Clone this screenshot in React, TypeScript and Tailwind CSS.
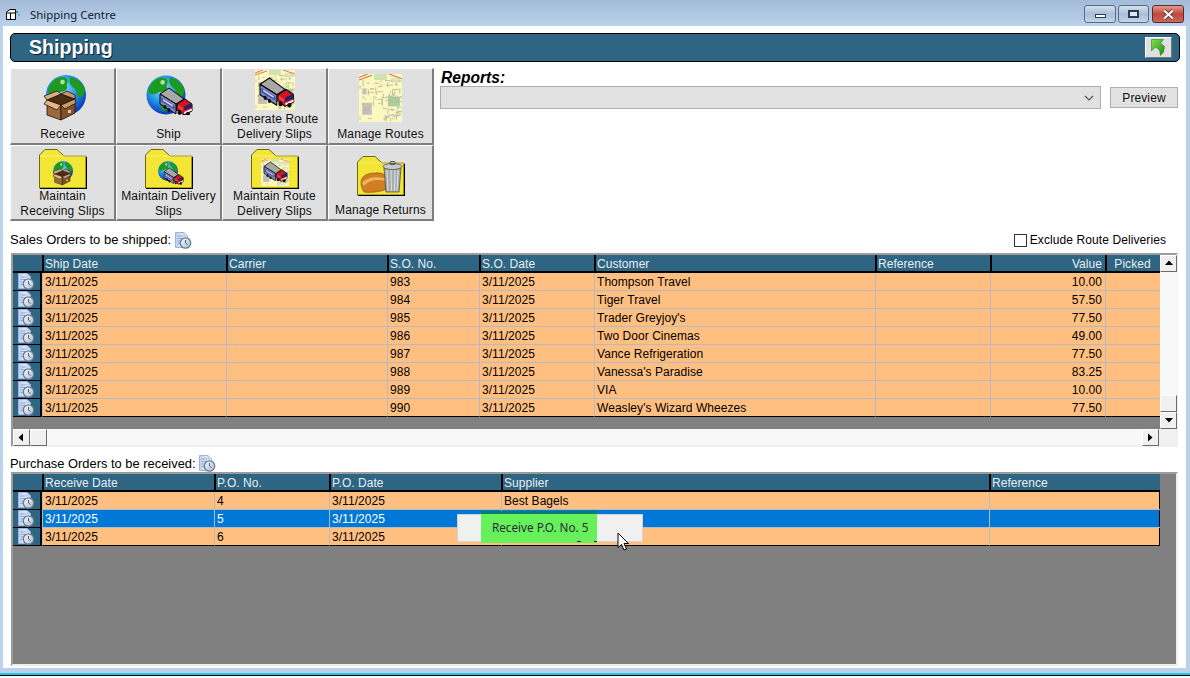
import React from "react";

const sansText = "font-['Liberation_Sans',Arial,sans-serif]";

function Globe({ x, y, r }: { x: number; y: number; r: number }) {
  const k = r / 20;
  return (
    <g transform={`translate(${x} ${y}) scale(${k})`}>
      <defs>
        <radialGradient id="globeFill" cx="0.42" cy="0.35" r="0.72">
          <stop offset="0" stopColor="#8fe0ff" />
          <stop offset="0.5" stopColor="#1e95ea" />
          <stop offset="1" stopColor="#0522a8" />
        </radialGradient>
      </defs>
      <circle cx="0" cy="0" r="20" fill="url(#globeFill)" />
      <path d="M-13 -14 C-8 -19 -1 -19 1 -16 C3 -13 0 -11 1 -8 C2 -5 -3 -3 -7 -3 C-10 -1 -15 1 -18 -3 C-18 -8 -16 -11 -13 -14Z" fill="#1f9a20" />
      <path d="M4 -18 C11 -17 17 -12 19 -5 C18 1 15 4 13 2 C10 0 11 -5 8 -7 C5 -9 2 -13 4 -18Z" fill="#1f9a20" />
      <path d="M-5 4 C-1 3 3 6 3 10 C2 14 -1 17 -3 17 C-5 14 -7 8 -5 4Z" fill="#1f9a20" />
      <path d="M-5 -15 C-2 -16 0 -14 -2 -11 C-5 -10 -7 -12 -5 -15Z" fill="#a9e09a" />
    </g>
  );
}

function Truck({ x, y, k = 1 }: { x: number; y: number; k?: number }) {
  return (
    <g transform={`translate(${x} ${y}) scale(${k})`}>
      <polygon points="0,6 9,0 24,11 16,16" fill="#a8a8a8" stroke="#000" strokeWidth="1" strokeLinejoin="round" />
      <polygon points="0,6 16,16 16,26 0,16" fill="#8087b0" stroke="#000" strokeWidth="1" strokeLinejoin="round" />
      <polygon points="1.500,9.500 14.500,17.500 14.500,21.500 1.500,13.500" fill="#3c48b4" />
      <polygon points="3,11 13,17.300 13,19 3,12.700" fill="#d9def8" />
      <polygon points="17,16 25,11 32,16 32,23 24,27 17,22" fill="#d4141f" stroke="#000" strokeWidth="1" strokeLinejoin="round" />
      <polygon points="24,18.500 32,15 32,19 24,22.500" fill="#23236b" />
      <polygon points="24,24 32,20.500 32,22.500 24,26" fill="#f3f3f3" />
      <polygon points="18,17 23,20 23,23 18,20" fill="#f04048" />
      <ellipse cx="19.500" cy="24.500" rx="2" ry="2.400" fill="#111" />
      <ellipse cx="28" cy="26" rx="2" ry="2.200" fill="#111" />
      <ellipse cx="5" cy="19" rx="1.500" ry="2" fill="#111" />
      <ellipse cx="9" cy="22" rx="1.500" ry="2" fill="#111" />
    </g>
  );
}

function BoxShape({ x, y, k = 1 }: { x: number; y: number; k?: number }) {
  return (
    <g transform={`translate(${x} ${y}) scale(${k})`} stroke="#1d1007" strokeWidth="0.8" strokeLinejoin="round">
      <polygon points="3,9 17,14 17,29 3,24" fill="#9a6a3d" />
      <polygon points="17,14 31,8 31,22 17,29" fill="#7f5228" />
      <polygon points="3,9 17,3 31,8 17,14" fill="#4d2d12" />
      <polygon points="3,9 0,5 13,0 17,3" fill="#dcae7b" />
      <polygon points="17,3 23,0 31,4 31,8" fill="#c89866" />
      <polygon points="3,9 17,14 13,19 0,13" fill="#e2b687" />
      <polygon points="31,8 17,14 21,18 32,12" fill="#c99a69" />
      <rect x="24" y="19" width="3" height="3" fill="#d8c89a" stroke="none" />
    </g>
  );
}

const streets = (() => {
  let s = 7;
  const rnd = () => {
    s = (s * 16807) % 2147483647;
    return s / 2147483647;
  };
  let d = "";
  for (let i = 0; i < 90; i++) {
    const x = 1 + rnd() * 37;
    const y = 5 + rnd() * 33;
    const len = 1.500 + rnd() * 4;
    d += rnd() > 0.5 ? `M${x.toFixed(1)} ${y.toFixed(1)}h${len.toFixed(1)}` : `M${x.toFixed(1)} ${y.toFixed(1)}v${len.toFixed(1)}`;
  }
  return d;
})();

function MapShape({ x, y, w, h }: { x: number; y: number; w: number; h: number }) {
  return (
    <g transform={`translate(${x} ${y}) scale(${w / 40} ${h / 40})`}>
      <rect width="40" height="40" fill="#fdf8c0" />
      <rect x="27" y="19" width="11" height="8" fill="#a8cf9a" />
      <rect x="3" y="24" width="9" height="10" fill="#c2c2ba" />
      <rect x="3" y="12" width="4" height="5" fill="#c2c2ba" />
      <rect x="14" y="0" width="12" height="5" fill="#cfe3ae" />
      <rect x="30" y="3" width="8" height="4" fill="#dbe6b4" />
      <path d={streets} stroke="#b9b9a2" strokeWidth="0.8" fill="none" />
      <path d="M0 5 L12 1 M28 0 L40 4 M0 3 L8 0" stroke="#e0683f" strokeWidth="0.9" fill="none" />
    </g>
  );
}

function FolderBack() {
  return (
    <>
      <path d="M0.500 39 V6 L6 0.500 H18 L25 7 H47 V39 Z" fill="#f3e636" stroke="#6b6b10" strokeWidth="1" />
      <path d="M1 39.500 H47.500 V8" fill="none" stroke="#000" strokeWidth="1.200" />
      <path d="M1 7 H47" stroke="#fff79a" strokeWidth="0.700" />
    </>
  );
}

function IconBox({ w, h, children }: { w: number; h: number; children: React.ReactNode }) {
  return (
    <svg width={w} height={h} viewBox={`0 0 ${w} ${h}`}>
      {children}
    </svg>
  );
}

const icons: Record<string, React.ReactNode> = {
  receive: (
    <IconBox w={48} h={46}>
      <Globe x={27} y={20} r={20} />
      <BoxShape x={5} y={16} k={1} />
    </IconBox>
  ),
  ship: (
    <IconBox w={48} h={40}>
      <Globe x={21} y={20} r={19.500} />
      <Truck x={15} y={13} k={1} />
    </IconBox>
  ),
  generate: (
    <IconBox w={40} h={41}>
      <MapShape x={0} y={0} w={40} h={40} />
      <Truck x={5} y={8} k={1.050} />
    </IconBox>
  ),
  routes: (
    <IconBox w={43} h={48}>
      <MapShape x={0} y={0} w={43} h={48} />
    </IconBox>
  ),
  mReceive: (
    <IconBox w={48} h={40}>
      <FolderBack />
      <Globe x={24} y={22} r={10} />
      <BoxShape x={14} y={20} k={0.550} />
    </IconBox>
  ),
  mDelivery: (
    <IconBox w={48} h={40}>
      <FolderBack />
      <Globe x={23} y={22} r={10} />
      <Truck x={19} y={19} k={0.600} />
    </IconBox>
  ),
  mRoute: (
    <IconBox w={48} h={40}>
      <FolderBack />
      <MapShape x={10} y={10} w={28} h={27} />
      <Truck x={13} y={13} k={0.720} />
    </IconBox>
  ),
  returns: (
    <IconBox w={48} h={40}>
      <FolderBack />
      <path d="M4 27 C4 20 10 17 18 17 C26 16 30 20 31 24 L30 33 C24 36 12 37 7 36 C5 33 4 30 4 27Z" fill="#cf7f22" stroke="#6d3a0a" strokeWidth="0.500" />
      <path d="M5 27 C10 21 20 20 30 23 L30 25 C20 23 12 24 7 30Z" fill="#efb45c" />
      <path d="M27 12 H44 L42 36 H29 Z" fill="#a9adad" stroke="#444" strokeWidth="0.700" />
      <path d="M30 14 L31 35 M34 14 L34.500 35 M38 14 L37.500 35 M41 14 L40 35" stroke="#e4e6e6" strokeWidth="0.900" />
      <ellipse cx="35.500" cy="10.500" rx="9.500" ry="3" fill="#c9cbcb" stroke="#444" strokeWidth="0.700" />
      <rect x="33" y="5.500" width="5" height="3" rx="1" fill="none" stroke="#444" strokeWidth="0.900" />
    </IconBox>
  ),
};

const tiles = [
  { icon: "receive", label: ["Receive"], pad: "mt-[6px]", row: 1 },
  { icon: "ship", label: ["Ship"], pad: "mt-[6px]", row: 1 },
  { icon: "generate", label: ["Generate Route", "Delivery Slips"], pad: "mt-[1px]", row: 1 },
  { icon: "routes", label: ["Manage Routes"], pad: "mt-[5px]", row: 1 },
  { icon: "mReceive", label: ["Maintain", "Receiving Slips"], pad: "mt-[3px]", row: 2 },
  { icon: "mDelivery", label: ["Maintain Delivery", "Slips"], pad: "mt-[3px]", row: 2 },
  { icon: "mRoute", label: ["Maintain Route", "Delivery Slips"], pad: "mt-[3px]", row: 2 },
  { icon: "returns", label: ["Manage Returns"], pad: "mt-[10px]", row: 2 },
];

function DocClock() {
  return (
    <svg width="17" height="17" viewBox="0 0 17 17" className="shrink-0">
      <defs>
        <linearGradient id="paper" x1="0" y1="0" x2="1" y2="0">
          <stop offset="0" stopColor="#bcd0f0" />
          <stop offset="1" stopColor="#f4f8ff" />
        </linearGradient>
        <linearGradient id="dial" x1="0" y1="0" x2="1" y2="1">
          <stop offset="0" stopColor="#f6f9fd" />
          <stop offset="1" stopColor="#a9bcd8" />
        </linearGradient>
      </defs>
      <path d="M0.500 0.500 H9 L12.500 4 V15.500 H0.500 Z" fill="url(#paper)" stroke="#9fb4dc" strokeWidth="1" />
      <path d="M2.500 4 H8 M2.500 6.500 H10 M2.500 9 H6 M2.500 11.500 H5" stroke="#7d9bd8" strokeWidth="0.800" />
      <path d="M9 0.500 V4 H12.500" fill="#d6e0f3" stroke="#9fb4dc" strokeWidth="0.700" />
      <circle cx="10.500" cy="11" r="5.200" fill="url(#dial)" stroke="#6d7a8a" strokeWidth="1.300" />
      <path d="M10.500 8 V11 L12.500 12.500" stroke="#4a5562" strokeWidth="0.900" fill="none" />
    </svg>
  );
}

function Arrow({ dir }: { dir: "up" | "down" | "left" | "right" }) {
  const pts = {
    up: "1,6 5,1.500 9,6",
    down: "1,2 5,6.500 9,2",
    left: "6,0.500 1.500,4.500 6,8.500",
    right: "2,0.500 6.500,4.500 2,8.500",
  }[dir];
  return (
    <svg width="10" height="9" viewBox="0 0 10 9">
      <polygon points={pts} fill="#000" />
    </svg>
  );
}

function ScrollBtn({ children, className }: { children?: React.ReactNode; className: string }) {
  return (
    <div className={`flex shrink-0 items-center justify-center border border-t-white border-l-white border-r-[#6b6b6b] border-b-[#6b6b6b] bg-[#f0f0f0] ${className}`}>
      {children}
    </div>
  );
}

const salesRows = [
  ["983", "Thompson Travel", "10.00"],
  ["984", "Tiger Travel", "57.50"],
  ["985", "Trader Greyjoy's", "77.50"],
  ["986", "Two Door Cinemas", "49.00"],
  ["987", "Vance Refrigeration", "77.50"],
  ["988", "Vanessa's Paradise", "83.25"],
  ["989", "VIA", "10.00"],
  ["990", "Weasley's Wizard Wheezes", "77.50"],
];

const salesCols = "grid grid-cols-[29px_184px_161px_92px_115px_281px_115px_115px_55px]";
const poCols = "grid grid-cols-[29px_172px_115px_172px_488px_171px]";

function HeadCell({ children, className = "" }: { children?: React.ReactNode; className?: string }) {
  return (
    <div className={`h-[18px] truncate border-b-2 border-l-[2px] border-b-black border-l-black pl-[1px] pr-[3px] leading-[18px] tracking-[0.05px] text-[#e8eef2] ${className}`}>
      {children}
    </div>
  );
}

function Cell({ children, className = "", line }: { children?: React.ReactNode; className?: string; line: string }) {
  return (
    <div className={`h-[18px] truncate border-b border-l border-l-[#b4bcc2] pl-[2px] pr-[3px] leading-[19px] tracking-[0.05px] ${line} ${className}`}>
      {children}
    </div>
  );
}

function RowHead() {
  return (
    <div className="flex h-[18px] items-center justify-center border-b border-r-2 border-b-black border-r-black bg-[#2e6583]">
      <DocClock />
    </div>
  );
}

export default function App() {
  return (
    <div className={`flex h-[678px] w-[1190px] flex-col overflow-hidden bg-white text-[12px] text-black ${sansText}`}>
      {/* title bar */}
      <div className="flex h-[26px] shrink-0 items-start bg-gradient-to-b from-[#a3bbd7] to-[#bad2ec]">
        <svg width="16" height="14" viewBox="0 0 16 14" className="ml-[5px] mt-[8px]">
          <path d="M1.500 4 L5 1.500 H10.500 V11.500 H1.500 Z" fill="#fff" stroke="#000" />
          <path d="M1.500 5 H10.500 M5.500 5 V11.500" stroke="#000" strokeWidth="1" />
          <rect x="11" y="3" width="2" height="2" fill="#19a7a7" />
          <rect x="13" y="6" width="2" height="2" fill="#8da3b8" />
        </svg>
        <div className="ml-[9px] mt-[6px] font-['Noto_Sans',sans-serif] text-[11.4px] leading-[18px] text-[#10202e]">Shipping Centre</div>
        <div className="ml-auto mr-[6px] mt-[5px] flex gap-[2px]">
          <div className="flex h-[18px] w-[32px] items-center justify-center rounded-[3px] border border-[#5a6c84] bg-gradient-to-b from-[#d3e0ef] via-[#a9bfd8] to-[#c3d6ea]">
            <div className="mt-[4px] h-[4px] w-[11px] border border-[#2b3a4d] bg-white" />
          </div>
          <div className="flex h-[18px] w-[31px] items-center justify-center rounded-[3px] border border-[#5a6c84] bg-gradient-to-b from-[#d3e0ef] via-[#a9bfd8] to-[#c3d6ea]">
            <div className="h-[8px] w-[11px] border-[2px] border-[#2b3a4d] bg-[#dfe8f2]" />
          </div>
          <div className="ml-[1px] flex h-[18px] w-[32px] items-center justify-center rounded-[3px] border border-[#5c2a2f] bg-gradient-to-b from-[#e09a8e] via-[#c4463a] to-[#c9685c]">
            <svg width="13" height="11" viewBox="0 0 13 11">
              <path d="M2 1.500 L11 9.500 M11 1.500 L2 9.500" stroke="#3b2a2a" strokeWidth="3.600" />
              <path d="M2 1.500 L11 9.500 M11 1.500 L2 9.500" stroke="#fff" strokeWidth="2.200" />
            </svg>
          </div>
        </div>
      </div>

      {/* middle */}
      <div className="flex h-[642px] shrink-0">
        <div className="w-[3px] bg-[#bad2ec]" />
        <div className="flex w-[1183px] flex-col bg-white pl-[7px] pr-[6px] pt-[7px]">
          {/* Header */}
          <div className="flex h-[29px] shrink-0 items-center rounded-[5px] border border-black bg-[#2e6583] pl-[18px] pr-[7px]">
            <div className="mt-[-2px] text-[19.600px] font-bold leading-[24px] text-white [text-shadow:1px_1px_0_#0b2433]">Shipping</div>
            <div className="ml-auto flex h-[21px] w-[27px] items-center justify-center border border-t-white border-l-white border-r-[#777] border-b-[#777] bg-[#e0e0e0]">
              <svg width="15" height="17" viewBox="0 0 15 17">
                <defs>
                  <linearGradient id="arrowFill" x1="0" y1="0" x2="1" y2="1">
                    <stop offset="0" stopColor="#7fe04a" />
                    <stop offset="1" stopColor="#1f8f16" />
                  </linearGradient>
                </defs>
                <path d="M0.500 0.500 H12.500 L9.500 4 L13.500 7.500 L12.500 13 L9.500 16.500 L8.500 11 L4.500 8 L0.500 12 Z" fill="url(#arrowFill)" stroke="#1a6a12" strokeWidth="0.500" />
              </svg>
            </div>
          </div>

          {/* Top panel */}
          <div className="mt-[6px] flex shrink-0">
            <div className="grid h-[153px] w-[424px] shrink-0 grid-cols-4 grid-rows-[77px_76px]">
              {tiles.map((t) => (
                <div key={t.icon} className="flex flex-col items-center border-b-2 border-l border-r-2 border-t border-b-[#7d7d7d] border-l-white border-r-[#7d7d7d] border-t-white bg-[#e0e0e0]">
                  <div className={`flex ${t.pad}`}>{icons[t.icon]}</div>
                  <div className="mb-[1px] mt-auto text-center leading-[15px] tracking-[0.15px] text-[#111]">
                    {t.label.map((l) => (
                      <div key={l}>{l}</div>
                    ))}
                  </div>
                </div>
              ))}
            </div>
            <div className="ml-[6px] flex w-[738px] flex-col">
              <div className="mt-[1px] h-[17px] pl-[1px] text-[15.600px] font-bold italic leading-[17px]">Reports:</div>
              <div className="flex h-[23px] items-center">
                <div className="flex h-[23px] w-[661px] items-center justify-end border border-[#adadad] bg-[#e1e1e1] pr-[6px]">
                  <svg width="10" height="6" viewBox="0 0 10 6">
                    <path d="M1 1 L5 5 L9 1" fill="none" stroke="#555" strokeWidth="1.200" />
                  </svg>
                </div>
                <div className="ml-[9px] flex h-[21px] w-[68px] items-center justify-center border border-[#adadad] bg-[#e1e1e1] tracking-[0.1px] text-[#111]">Preview</div>
              </div>
            </div>
          </div>

          {/* Sales label */}
          <div className="mt-[10px] flex h-[18px] shrink-0 items-center">
            <span className="text-[13px] leading-[18px]">Sales Orders to be shipped:</span>
            <span className="ml-[4px]"><DocClock /></span>
            <div className="ml-auto mr-[14px] flex items-center">
              <div className="h-[13px] w-[13px] border border-[#333] bg-white" />
              <span className="ml-[3px] leading-[18px] tracking-[0.09px]">Exclude Route Deliveries</span>
            </div>
          </div>

          {/* Sales grid */}
          <div className="ml-[1px] mt-[4px] flex h-[194px] w-[1167px] shrink-0 flex-col border-2 border-b-[#efefef] border-l-[#9c9c9c] border-r-[#efefef] border-t-[#9c9c9c] bg-[#808080]">
            <div className="flex h-[174px] shrink-0">
              <div className="w-[1147px] shrink-0">
                <div className={`${salesCols} bg-[#2e6583]`}>
                  <div className="h-[18px] border-b-2 border-b-black" />
                  <HeadCell>Ship Date</HeadCell>
                  <HeadCell>Carrier</HeadCell>
                  <HeadCell>S.O. No.</HeadCell>
                  <HeadCell>S.O. Date</HeadCell>
                  <HeadCell>Customer</HeadCell>
                  <HeadCell>Reference</HeadCell>
                  <HeadCell className="text-right">Value</HeadCell>
                  <HeadCell className="text-center">Picked</HeadCell>
                </div>
                {salesRows.map((r, i) => {
                  const line = i === salesRows.length - 1 ? "border-b-black" : "border-b-[#b4bcc2]";
                  return (
                    <div key={r[0]} className={`${salesCols} bg-[#ffbf80]`}>
                      <RowHead />
                      <Cell line={line}>3/11/2025</Cell>
                      <Cell line={line} />
                      <Cell line={line}>{r[0]}</Cell>
                      <Cell line={line}>3/11/2025</Cell>
                      <Cell line={line}>{r[1]}</Cell>
                      <Cell line={line} />
                      <Cell line={line} className="text-right">{r[2]}</Cell>
                      <Cell line={line} />
                    </div>
                  );
                })}
              </div>
              <div className="flex w-[17px] shrink-0 flex-col bg-[#f8f8f8]">
                <ScrollBtn className="h-[17px]"><Arrow dir="up" /></ScrollBtn>
                <div className="flex-1" />
                <ScrollBtn className="h-[17px]" />
                <ScrollBtn className="h-[17px]"><Arrow dir="down" /></ScrollBtn>
              </div>
            </div>
            <div className="flex h-[16px] shrink-0 bg-[#f8f8f8]">
              <ScrollBtn className="h-[17px] w-[17px]"><Arrow dir="left" /></ScrollBtn>
              <ScrollBtn className="h-[17px] w-[17px]" />
              <div className="flex-1" />
              <ScrollBtn className="h-[17px] w-[17px]"><Arrow dir="right" /></ScrollBtn>
              <div className="h-[17px] w-[17px] bg-[#f0f0f0]" />
            </div>
          </div>

          {/* PO label */}
          <div className="mt-[8px] flex h-[17px] shrink-0 items-center">
            <span className="text-[12.900px] leading-[17px]">Purchase Orders to be received:</span>
            <span className="ml-[3px]"><DocClock /></span>
          </div>

          {/* PO grid */}
          <div className="relative ml-[1px] flex h-[194px] w-[1167px] shrink-0 flex-col border-2 border-b-[#efefef] border-l-[#9c9c9c] border-r-[#efefef] border-t-[#9c9c9c] bg-[#808080]">
            <div className="w-[1147px]">
              <div className={`${poCols} bg-[#2e6583]`}>
                <div className="h-[18px] border-b-2 border-b-black" />
                <HeadCell>Receive Date</HeadCell>
                <HeadCell>P.O. No.</HeadCell>
                <HeadCell>P.O. Date</HeadCell>
                <HeadCell>Supplier</HeadCell>
                <HeadCell>Reference</HeadCell>
              </div>
              {[
                ["4", "Best Bagels"],
                ["5", ""],
                ["6", ""],
              ].map((r, i) => {
                const selected = i === 1;
                const line = i === 2 ? "border-b-black" : "border-b-[#b4bcc2]";
                return (
                  <div key={r[0]} className={`${poCols} ${selected ? "bg-[#0078d7] text-white" : "bg-[#ffbf80]"} border-r border-r-black`}>
                    <RowHead />
                    <Cell line={line}>3/11/2025</Cell>
                    <Cell line={line}>{r[0]}</Cell>
                    <Cell line={line}>3/11/2025</Cell>
                    <Cell line={line}>{r[1]}</Cell>
                    <Cell line={line} />
                  </div>
                );
              })}
            </div>

            {/* floating tooltip */}
            <div className="absolute left-[444px] top-[40px] flex h-[28px] w-[186px] border border-[#d4d4d4] bg-[#f0f0f0]">
              <div className="absolute left-[23px] top-[-4px] h-[32px] w-[116px] bg-[#66f05c]">
                <div className="h-[3px] bg-[#0a7d72]" />
                <div className="pl-[11px] pt-[5px] font-['Noto_Sans',sans-serif] text-[11.700px] leading-[16px] text-[#2b2b3a]">Receive P.O. No. 5</div>
                <div className="absolute bottom-[1px] left-[96px] h-[1px] w-[4px] bg-[#222]" />
                <div className="absolute bottom-[1px] left-[113px] h-[1px] w-[3px] bg-[#222]" />
              </div>
            </div>
            <svg width="14" height="20" viewBox="0 0 14 20" className="absolute left-[604px] top-[58px]">
              <path d="M1 1 V15.500 L4.500 12.500 L7 18 L9.500 17 L7 11.500 L11.500 11.500 Z" fill="#fff" stroke="#000" strokeWidth="1" />
            </svg>
          </div>
        </div>
        <div className="w-[4px] bg-[#bad2ec]" />
      </div>

      {/* bottom edge */}
      <div className="h-[5px] shrink-0 bg-[#bad2ec]" />
      <div className="h-[2px] shrink-0 bg-[#1fc8e0]" />
      <div className="h-[1px] shrink-0 bg-black" />
    </div>
  );
}
